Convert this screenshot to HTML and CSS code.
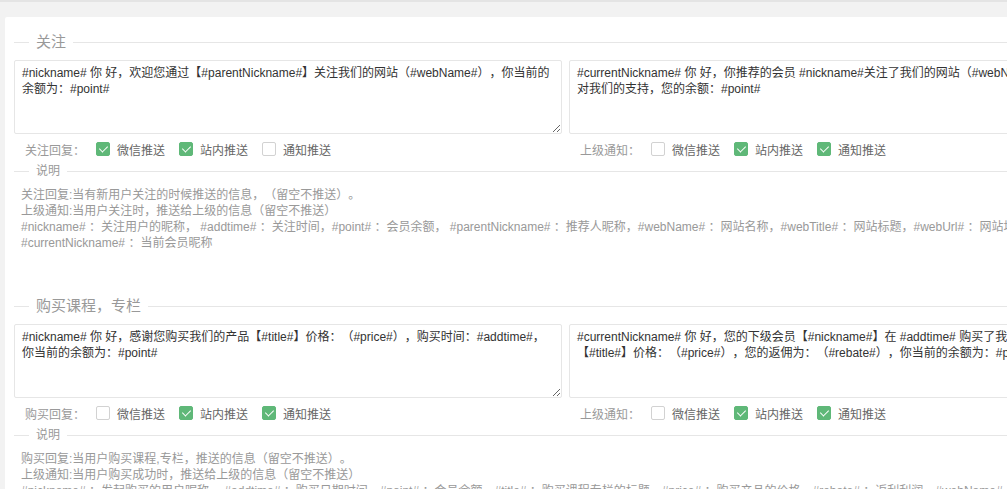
FILE: index.html
```html
<!DOCTYPE html>
<html lang="zh-CN">
<head>
    <meta charset="UTF-8">
    <title>消息推送设置</title>
    <link rel="stylesheet" href="styles.css">
</head>
<body>

<div class="card">

    <!--关注-->
    <div class="section">
        <fieldset class="field_title"><legend>关注</legend></fieldset>

        <div class="cols">
            <div class="col">
                <textarea class="tpl">#nickname# 你 好，欢迎您通过【#parentNickname#】关注我们的网站（#webName#），你当前的余额为：#point#</textarea>
                <div class="opts">
                    <span class="opts_label">关注回复：</span>
                    <label class="cb on"><i></i>微信推送</label>
                    <label class="cb on"><i></i>站内推送</label>
                    <label class="cb"><i></i>通知推送</label>
                </div>
            </div>
            <div class="col">
                <textarea class="tpl">#currentNickname# 你 好，你推荐的会员 #nickname#关注了我们的网站（#webName#），感谢您对我们的支持，您的余额：#point#</textarea>
                <div class="opts">
                    <span class="opts_label">上级通知：</span>
                    <label class="cb"><i></i>微信推送</label>
                    <label class="cb on"><i></i>站内推送</label>
                    <label class="cb on"><i></i>通知推送</label>
                </div>
            </div>
        </div>

        <fieldset class="field_title small"><legend>说明</legend></fieldset>
        <div class="note">
            关注回复:当有新用户关注的时候推送的信息，（留空不推送）。<br>
            上级通知:当用户关注时，推送给上级的信息（留空不推送）<br>
            #nickname# ：关注用户的昵称， #addtime# ：关注时间，#point# ：会员余额， #parentNickname# ：推荐人昵称，#webName# ：网站名称，#webTitle# ：网站标题，#webUrl# ：网站地址，<br>
            #currentNickname# ：当前会员昵称
        </div>
    </div>

    <!--购买课程，专栏-->
    <div class="section">
        <fieldset class="field_title"><legend>购买课程，专栏</legend></fieldset>

        <div class="cols">
            <div class="col">
                <textarea class="tpl">#nickname# 你 好，感谢您购买我们的产品【#title#】价格：（#price#），购买时间：#addtime#，你当前的余额为：#point#</textarea>
                <div class="opts">
                    <span class="opts_label">购买回复：</span>
                    <label class="cb"><i></i>微信推送</label>
                    <label class="cb on"><i></i>站内推送</label>
                    <label class="cb on"><i></i>通知推送</label>
                </div>
            </div>
            <div class="col">
                <textarea class="tpl">#currentNickname# 你 好，您的下级会员【#nickname#】在 #addtime# 购买了我们的产品【#title#】价格：（#price#），您的返佣为：（#rebate#），你当前的余额为：#point#</textarea>
                <div class="opts">
                    <span class="opts_label">上级通知：</span>
                    <label class="cb"><i></i>微信推送</label>
                    <label class="cb on"><i></i>站内推送</label>
                    <label class="cb on"><i></i>通知推送</label>
                </div>
            </div>
        </div>

        <fieldset class="field_title small"><legend>说明</legend></fieldset>
        <div class="note">
            购买回复:当用户购买课程,专栏，推送的信息（留空不推送）。<br>
            上级通知:当用户购买成功时，推送给上级的信息（留空不推送）<br>
            #nickname# ：发起购买的用户昵称， #addtime# ：购买日期时间，#point# ：会员余额，#title# ：购买课程专栏的标题，#price# ：购买产品的价格，#rebate# ：返利利润，#webName# ：网站名称<br>
            #currentNickname# ：当前会员昵称
        </div>
    </div>

</div>

</body>
</html>
```

FILE: styles.css
```css
*{
    margin: 0;
    padding: 0;
    box-sizing: border-box;
}
html{
    overflow: hidden;
}
body{
    background-color: #f2f2f2;
    border-top: 2px solid #e4e4e4;
    font-family: "Liberation Sans", "Noto Sans CJK SC", sans-serif;
    font-size: 12px;
    color: #666;
    /*不压缩中文标点*/
    text-spacing-trim: space-all;
}

.card{
    width: 1121px;
    margin: 15px 0 0 5px;
    padding: 15px 9px 40px;
    background-color: #fff;
    border-radius: 2px;
}

.section{
    margin-bottom: 45px;
}

/*标题线*/
.field_title{
    border: 0;
    border-top: 1px solid #e6e6e6;
    margin: 0 0 8px;
    padding: 0;
}
.field_title legend{
    margin-left: 15px;
    padding: 0 7px;
    font-size: 15px;
    line-height: 20px;
    color: #999;
}
.field_title.small{
    margin-top: 4px;
}
.field_title.small legend{
    font-size: 12px;
    line-height: 16px;
}

.cols{
    display: flex;
    gap: 7px;
}
.col{
    width: 548px;
}

.tpl{
    display: block;
    width: 100%;
    height: 74px;
    border: 1px solid #e6e6e6;
    border-radius: 2px;
    padding: 4px 7px;
    font-family: "Liberation Sans", "Noto Sans CJK SC", sans-serif;
    font-size: 12px;
    line-height: 16px;
    color: #333;
    outline: none;
    text-spacing-trim: space-all;
}

.opts{
    display: flex;
    align-items: center;
    height: 20px;
    margin-top: 5px;
    padding-left: 11px;
}
.opts_label{
    color: #999;
    margin-right: 11px;
}

.cb{
    display: inline-flex;
    align-items: center;
    margin-right: 14px;
    color: #666;
}
.cb i{
    position: relative;
    width: 14px;
    height: 14px;
    margin-right: 7px;
    border: 1px solid #d2d2d2;
    border-radius: 2px;
    background-color: #fff;
}
.cb.on i{
    background-color: #5FB878;
    border-color: #5FB878;
}
.cb.on i::after{
    content: "";
    position: absolute;
    left: 4px;
    top: 1px;
    width: 4px;
    height: 7px;
    border: solid #fff;
    border-width: 0 1.5px 1.5px 0;
    transform: rotate(45deg);
}

.note{
    padding-left: 7px;
    line-height: 16px;
    color: #999;
    white-space: nowrap;
}
```
